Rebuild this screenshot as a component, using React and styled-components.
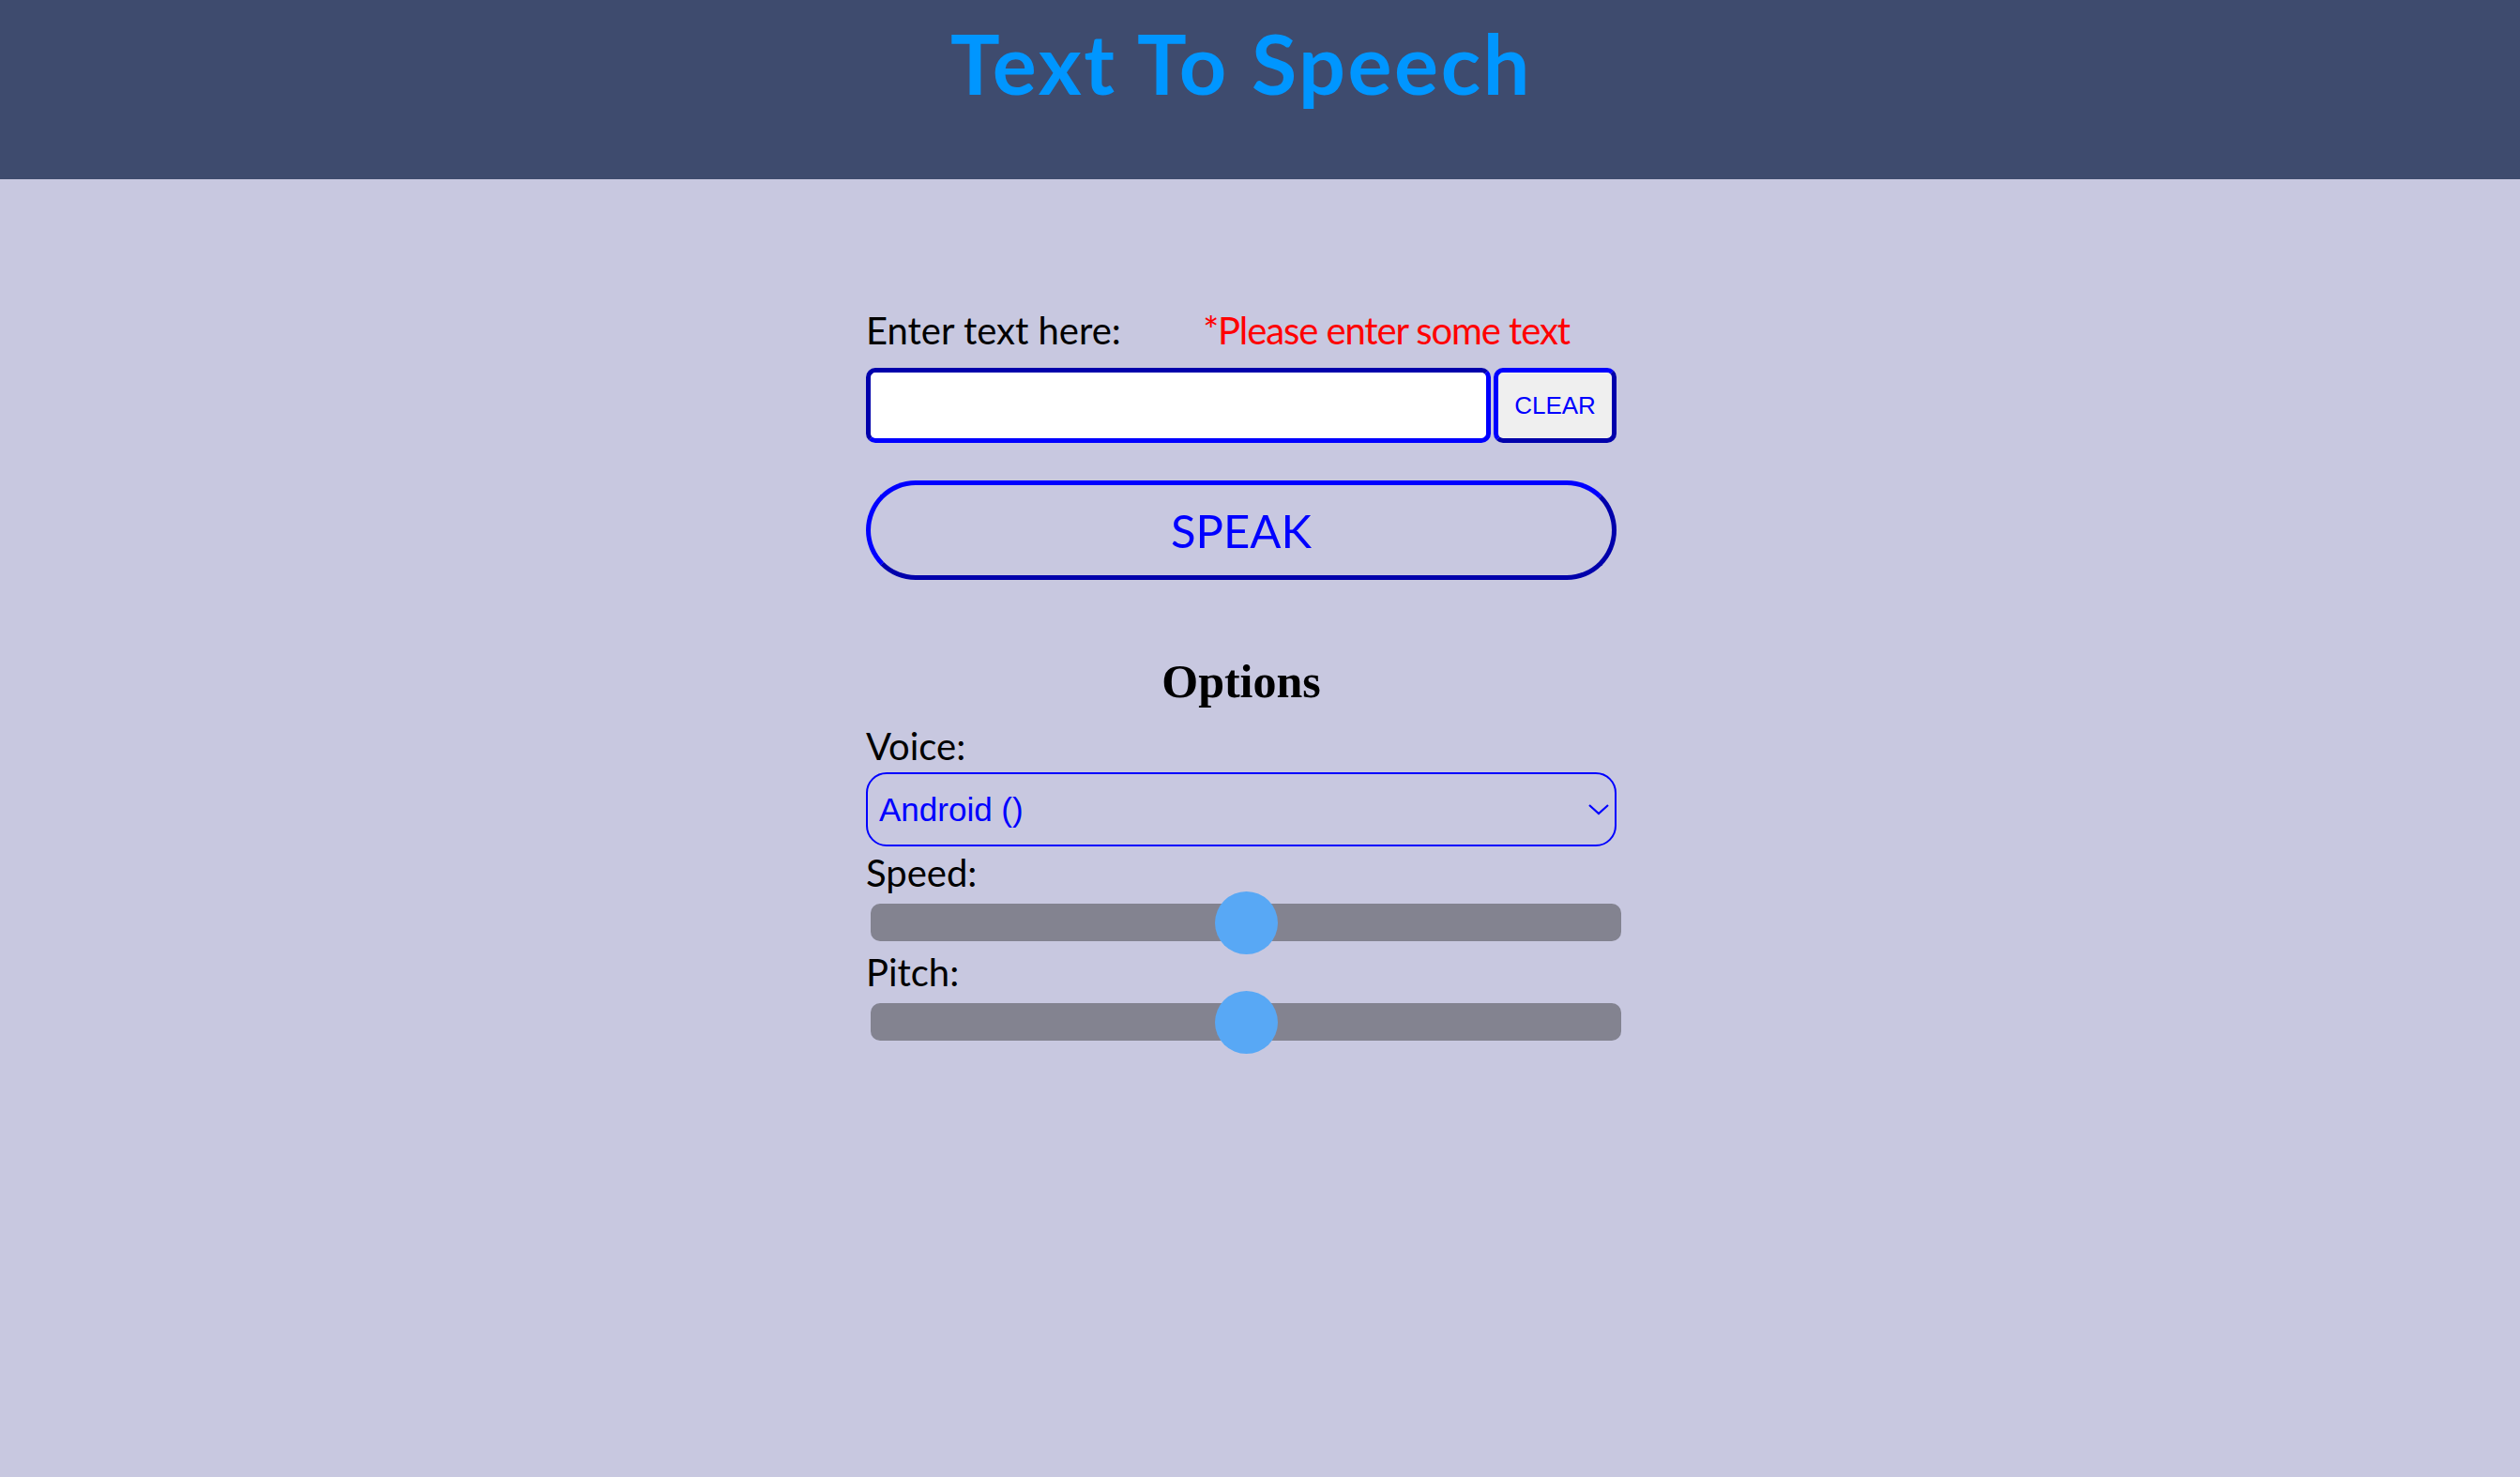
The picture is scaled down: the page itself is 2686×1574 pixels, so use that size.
import React, { useState } from 'react';
import styled, { createGlobalStyle } from 'styled-components';

const GlobalStyle = createGlobalStyle`
  body {
    margin: 0;
    background-color: #c8c8e0;
    font-family: Lato, "Noto Sans", sans-serif;
  }
`;

const Header = styled.header`
  height: 191px;
  background-color: #3e4b6e;
  display: flex;
  justify-content: center;
  padding-right: 40px;
  box-sizing: border-box;
`;

const Title = styled.h1`
  margin: 23px 0 0;
  font-family: Lato, sans-serif;
  font-weight: 700;
  font-size: 88px;
  line-height: 1;
  letter-spacing: 2.6px;
  color: #0096ff;
`;

const Page = styled.div`
  display: flex;
  justify-content: center;
  padding-right: 40px;
  padding-bottom: 120px;
`;

const Form = styled.div`
  width: 800px;
  margin-top: 137px;
  display: flex;
  flex-direction: column;
`;

const LabelRow = styled.div`
  display: flex;
  justify-content: space-between;
  align-items: baseline;
  padding-right: 50px;
`;

const Label = styled.label`
  font-size: 40px;
  line-height: 48px;
  color: #000;
  margin-top: ${p => p.$top || 0}px;
`;

const Error = styled.span`
  font-size: 40px;
  line-height: 48px;
  letter-spacing: -1.1px;
  color: #ff0000;
`;

const InputRow = styled.div`
  display: flex;
  gap: 3px;
  height: 80px;
  margin-top: 16px;
`;

const TextInput = styled.input`
  flex: 1;
  min-width: 0;
  box-sizing: border-box;
  border: 5px inset #0000ff;
  border-radius: 10px;
  background: #fff;
  font-family: Lato, sans-serif;
  font-size: 36px;
  padding: 0 12px;
  outline: none;
`;

const ClearButton = styled.button`
  width: 131px;
  box-sizing: border-box;
  border: 5px outset #0000ff;
  border-radius: 10px;
  background: #efefef;
  color: #0000ff;
  font-family: "Liberation Sans", Arial, sans-serif;
  font-size: 26px;
  padding: 0;
  cursor: pointer;
`;

const SpeakButton = styled.button`
  margin-top: 40px;
  height: 106px;
  box-sizing: border-box;
  border: 5px outset #0000ff;
  border-radius: 53px;
  background: transparent;
  color: #0000ff;
  font-family: Lato, sans-serif;
  font-size: 49px;
  cursor: pointer;
`;

const OptionsTitle = styled.h2`
  margin: 84px 0 0;
  font-family: "Liberation Serif", "Times New Roman", serif;
  font-weight: 700;
  font-size: 50px;
  line-height: 49px;
  text-align: center;
  color: #000;
`;

const SelectBox = styled.div`
  position: relative;
  margin-top: 4px;
  height: 79px;
`;

const Select = styled.select`
  appearance: none;
  width: 100%;
  height: 100%;
  box-sizing: border-box;
  border: 2px solid #0000ff;
  border-radius: 22px;
  background: transparent;
  color: #0000ff;
  font-family: "Liberation Sans", Arial, sans-serif;
  font-size: 35px;
  padding: 0 12px;
  outline: none;
`;

const Chevron = styled.svg`
  position: absolute;
  right: 7px;
  top: 33px;
  pointer-events: none;
`;

const Slider = styled.input`
  -webkit-appearance: none;
  appearance: none;
  width: 800px;
  height: 40px;
  margin: 9px 0 9px 5px;
  background: #838390;
  border-radius: 10px;
  outline: none;

  &::-webkit-slider-thumb {
    -webkit-appearance: none;
    appearance: none;
    width: 67px;
    height: 67px;
    border-radius: 50%;
    background: #58a8f5;
    cursor: pointer;
  }
`;

export default function App() {
  const [text, setText] = useState('');
  const [speed, setSpeed] = useState(1);
  const [pitch, setPitch] = useState(1);

  return (
    <>
      <GlobalStyle />
      <Header>
        <Title>Text To Speech</Title>
      </Header>
      <Page>
        <Form>
          <LabelRow>
            <Label>Enter text here:</Label>
            {!text && <Error>*Please enter some text</Error>}
          </LabelRow>
          <InputRow>
            <TextInput value={text} onChange={e => setText(e.target.value)} />
            <ClearButton onClick={() => setText('')}>CLEAR</ClearButton>
          </InputRow>
          <SpeakButton>SPEAK</SpeakButton>
          <OptionsTitle>Options</OptionsTitle>
          <Label $top={20}>Voice:</Label>
          <SelectBox>
            <Select defaultValue="android">
              <option value="android">Android ()</option>
            </Select>
            <Chevron width="24" height="14" viewBox="0 0 24 14">
              <path d="M2 2 L12 11 L22 2" fill="none" stroke="#0000ff" strokeWidth="2.2" />
            </Chevron>
          </SelectBox>
          <Label $top={4}>Speed:</Label>
          <Slider type="range" min="0" max="2" step="0.1" value={speed} onChange={e => setSpeed(e.target.value)} />
          <Label>Pitch:</Label>
          <Slider type="range" min="0" max="2" step="0.1" value={pitch} onChange={e => setPitch(e.target.value)} />
        </Form>
      </Page>
    </>
  );
}
